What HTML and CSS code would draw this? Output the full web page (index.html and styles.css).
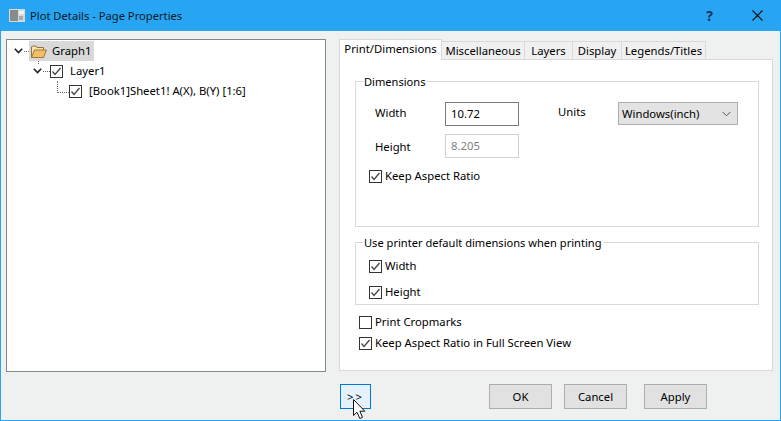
FILE: index.html
```html
<!DOCTYPE html>
<html>
<head>
  <title>Plot Details - Page Properties</title>
  <link rel="stylesheet" href="styles.css">
</head>

<body>

  <svg class="defs" width="0" height="0">
    <symbol id="tick" viewBox="0 0 13 13">
      <rect x="0.5" y="0.5" width="12" height="12" fill="#fff" stroke="#333"/>
      <path d="M2.5 6.5 L5 9.5 L10.5 3" fill="none" stroke="#444" stroke-width="1.3"/>
    </symbol>
    <symbol id="chevron" viewBox="0 0 9 6">
      <path d="M0.8 0.8 L4.5 4.6 L8.2 0.8" fill="none" stroke="#222" stroke-width="1.6"/>
    </symbol>
    <symbol id="chevron-thin" viewBox="0 0 9 6">
      <path d="M0.5 0.8 L4.5 4.8 L8.5 0.8" fill="none" stroke="#555" stroke-width="1"/>
    </symbol>
  </svg>

  <div class="dialog">

    <header class="titlebar">
      <svg class="app-icon" width="16" height="13" viewBox="0 0 16 13">
        <rect width="16" height="13" fill="#d8d8d8"/>
        <rect x="1" y="1" width="8" height="11" fill="#8a8a8a"/>
        <rect x="10" y="2" width="5" height="3" fill="#f2f2f2"/>
        <rect x="10" y="7" width="4" height="4" fill="#a8a8a8"/>
      </svg>
      <span class="title">Plot Details - Page Properties</span>
      <span class="help">?</span>
      <svg class="close" width="11" height="11" viewBox="0 0 11 11">
        <path d="M0.5 0.5 L10.5 10.5 M10.5 0.5 L0.5 10.5" stroke="#111" stroke-width="1.1"/>
      </svg>
    </header>

    <main class="content">
      <div class="tree">
        <div class="tree-row row-graph">
          <svg class="expander"><use href="#chevron"/></svg>
          <span class="dots"></span>
          <span class="selected">
            <svg class="folder" width="16" height="13" viewBox="0 0 16 13">
              <path d="M0.5 12.5 V2 L1.5 1 H5 L6 2.5 H12.5 V5" fill="#f7e3a8" stroke="#8a7440"/>
              <path d="M0.5 12.5 L3.5 5 H15.5 L12.5 12.5 Z" fill="#f3bd62" stroke="#9a7a3a"/>
            </svg>
            Graph1
          </span>
        </div>
        <div class="tree-row row-layer">
          <svg class="expander"><use href="#chevron"/></svg>
          <span class="dots"></span>
          <svg class="check"><use href="#tick"/></svg>
          <span class="tree-label">Layer1</span>
        </div>
        <div class="tree-row row-plot">
          <span class="elbow"></span>
          <svg class="check"><use href="#tick"/></svg>
          <span class="tree-label">[Book1]Sheet1! A(X), B(Y) [1:6]</span>
        </div>
      </div>

      <div class="pages">
        <div class="tabs">
          <div class="tab active tab-print">Print/Dimensions</div>
          <div class="tab tab-misc">Miscellaneous</div>
          <div class="tab tab-layers">Layers</div>
          <div class="tab tab-display">Display</div>
          <div class="tab tab-legends">Legends/Titles</div>
        </div>

        <div class="panel">
          <fieldset class="group group-dimensions">
            <legend>Dimensions</legend>
            <div class="fields">
              <label class="label-width">Width</label>
              <input class="num" type="text" value="10.72">
              <label class="units-label">Units</label>
              <div class="select">Windows(inch)<svg class="select-arrow"><use href="#chevron-thin"/></svg></div>
              <label class="label-height">Height</label>
              <input class="num disabled" type="text" value="8.205" disabled>
            </div>
            <div class="checkrow aspect"><svg class="check"><use href="#tick"/></svg>Keep Aspect Ratio</div>
          </fieldset>

          <fieldset class="group group-printer">
            <legend>Use printer default dimensions when printing</legend>
            <div class="checkrow first"><svg class="check"><use href="#tick"/></svg>Width</div>
            <div class="checkrow second"><svg class="check"><use href="#tick"/></svg>Height</div>
          </fieldset>

          <div class="options">
            <div class="checkrow"><span class="box"></span>Print Cropmarks</div>
            <div class="checkrow"><svg class="check"><use href="#tick"/></svg>Keep Aspect Ratio in Full Screen View</div>
          </div>
        </div>
      </div>
    </main>

    <footer class="buttons">
      <button class="btn more">&gt;&gt;<svg class="cursor" width="14" height="21" viewBox="0 0 14 21">
        <path d="M0.5 0.5 V16.5 L4 13.2 L6.8 19.5 L9.5 18.3 L6.9 12.2 H11.8 Z" fill="#fff" stroke="#111"/>
      </svg></button>
      <button class="btn ok">OK</button>
      <button class="btn cancel">Cancel</button>
      <button class="btn apply">Apply</button>
    </footer>

  </div>

</body>

</html>
```

FILE: styles.css
```css
html, body {
  margin: 0;
  padding: 0;
  overflow: hidden;
}

body {
  font-family: "Noto Sans", sans-serif;
  font-size: 11.3px;
  line-height: 16px;
  color: #000;
}

.defs {
  display: block;
  height: 0;
}

.dialog {
  box-sizing: border-box;
  width: 781px;
  height: 421px;
  background: #eff0f0;
  border: 1px solid #27a4f2;
  border-top: 0;
}

/* title bar */
.titlebar {
  display: flex;
  align-items: center;
  height: 31px;
  margin: 0 -1px;
  background: #27a4f2;
}

.app-icon {
  margin-left: 9px;
}

.title {
  margin-left: 5px;
  flex: 1;
  font-size: 11.2px;
  color: #0a1a28;
}

.help {
  font-size: 14px;
  font-weight: bold;
  color: #12335a;
  margin-right: 39px;
}

.close {
  margin-right: 18px;
}

/* tree and pages */
.content {
  display: flex;
  padding: 8px 7px 0 5px;
}

.tree {
  box-sizing: border-box;
  width: 320px;
  height: 333px;
  margin-right: 13px;
  padding-top: 1px;
  background: #fff;
  border: 1px solid #828790;
}

.tree-row {
  position: relative;
  display: flex;
  align-items: center;
  height: 20px;
}

.row-graph {
  padding-left: 7px;
}

.row-layer {
  padding-left: 26px;
}

.row-layer::before {
  content: "";
  position: absolute;
  left: 31px;
  top: 0;
  height: 3px;
  border-left: 1px dotted #666;
}

.row-plot {
  padding-left: 50px;
  align-items: flex-start;
}

.row-plot .check {
  margin-top: 4px;
}

.row-plot .tree-label {
  margin-top: 2px;
}

.expander {
  width: 9px;
  height: 6px;
}

.dots {
  width: 5px;
  margin-left: 1px;
  border-top: 1px dotted #666;
}

.row-layer .dots {
  width: 7px;
}

.elbow {
  width: 11px;
  height: 11px;
  border-left: 1px dotted #666;
  border-bottom: 1px dotted #666;
}

.selected {
  display: flex;
  align-items: center;
  box-sizing: border-box;
  width: 65px;
  height: 20px;
  background: #d9d9d9;
}

.folder {
  margin: 0 5px 0 2px;
}

.check {
  display: block;
  flex: none;
  width: 13px;
  height: 13px;
}

.tree-label {
  margin-left: 7px;
  white-space: nowrap;
}

.pages {
  width: 434px;
}

.tabs {
  position: relative;
  display: flex;
  align-items: flex-end;
  height: 21px;
  margin-bottom: -1px;
}

.tab {
  box-sizing: border-box;
  height: 19px;
  text-align: center;
  line-height: 18px;
  background: #f0f0f0;
  border: 1px solid #d9d9d9;
  border-left: 0;
  white-space: nowrap;
}

.tab.active {
  position: relative;
  height: 21px;
  line-height: 18px;
  background: #fff;
  border-left: 1px solid #d9d9d9;
  border-bottom: 0;
}

.tab-print { width: 103px; }
.tab-misc { width: 83px; }
.tab-layers { width: 48px; }
.tab-display { width: 49px; }
.tab-legends { width: 84px; }

.panel {
  box-sizing: border-box;
  height: 312px;
  padding: 13px 13px 0 15px;
  background: #fff;
  border: 1px solid #d9d9d9;
}

/* group boxes */
.group {
  margin: 0;
  padding: 0 13px;
  border: 1px solid #d9d9d9;
}

.group legend {
  margin-left: -6px;
  padding: 1px 1px 0;
  font-size: 11.1px;
  line-height: 16px;
}

.group-dimensions {
  box-sizing: border-box;
  height: 154px;
}

.group-printer {
  box-sizing: border-box;
  height: 71px;
  margin-top: 7px;
}

.fields {
  display: grid;
  grid-template-columns: 70px 74px 99px 120px;
  grid-auto-rows: 24px;
  row-gap: 8px;
  align-items: center;
  margin: 12px 0 0 6px;
}

.label-width {
  margin-top: -3px;
}

.label-height {
  margin-top: 1px;
}

.units-label {
  padding-left: 39px;
  margin-top: -4px;
}

.num {
  box-sizing: border-box;
  width: 74px;
  height: 24px;
  padding: 0 5px 2px;
  font: inherit;
  color: #000;
  background: #fff;
  border: 1px solid #7a7a7a;
  border-radius: 0;
  outline: 0;
}

.num.disabled {
  color: #808080;
  border-color: #d0d0d0;
}

.select {
  box-sizing: border-box;
  display: flex;
  align-items: center;
  justify-content: space-between;
  align-self: start;
  width: 120px;
  height: 23px;
  padding: 0 3px;
  background: #e3e3e3;
  border: 1px solid #adadad;
}

.select-arrow {
  width: 9px;
  height: 6px;
  margin-right: 3px;
}

.checkrow {
  display: flex;
  align-items: center;
  gap: 3px;
  height: 16px;
}

.aspect {
  margin-top: 10px;
}

.group-printer .first {
  margin-top: 7px;
}

.group-printer .second {
  margin-top: 10px;
}

.options {
  margin: 9px 0 0 4px;
}

.options .checkrow + .checkrow {
  margin-top: 5px;
}

.box {
  box-sizing: border-box;
  flex: none;
  width: 13px;
  height: 13px;
  background: #fff;
  border: 1px solid #333;
}

/* bottom buttons */
.buttons {
  display: flex;
  padding: 12px 0 0 339px;
}

.btn {
  box-sizing: border-box;
  width: 63px;
  height: 25px;
  padding: 0;
  font: inherit;
  color: #000;
  background: #e1e1e1;
  border: 1px solid #adadad;
  border-radius: 0;
}

.more {
  position: relative;
  width: 31px;
  letter-spacing: 2px;
  background: #e5f1fb;
  border-color: #0078d7;
}

.cursor {
  position: absolute;
  left: 12px;
  top: 14px;
}

.ok {
  margin-left: 118px;
}

.cancel {
  margin-left: 12px;
}

.apply {
  margin-left: 17px;
}
```
